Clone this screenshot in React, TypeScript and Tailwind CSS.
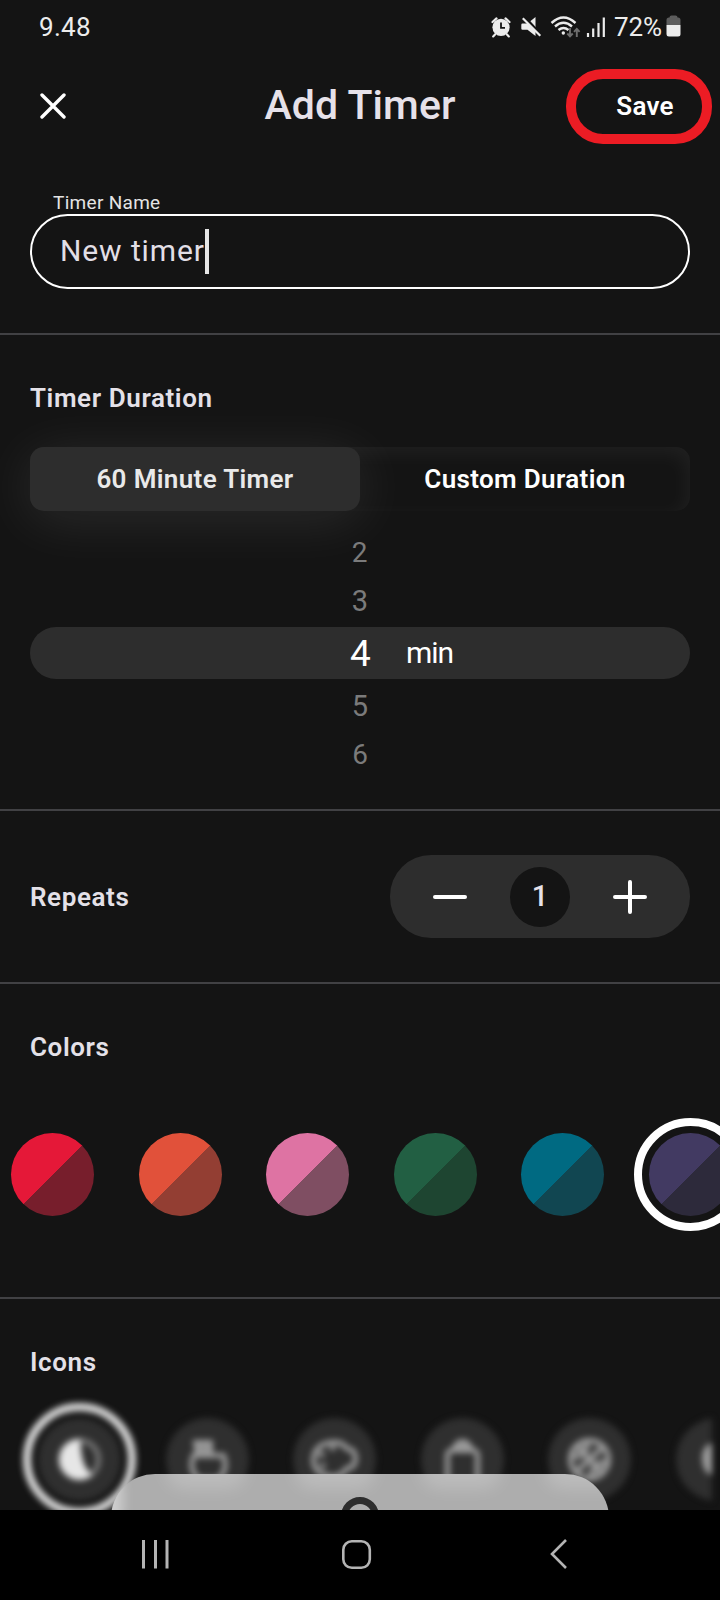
import React from "react";

const cores = [
    { clara: "#e51838", escura: "#771e2c" },
    { clara: "#e1513a", escura: "#933e33" },
    { clara: "#de73a3", escura: "#7f4e62" },
    { clara: "#225f43", escura: "#1e4531" },
    { clara: "#006a82", escura: "#114651" },
    { clara: "#423a62", escura: "#2d2a3b" },
];

const StatusBar: React.FC = () => {
    return (
        <div className="flex h-[54px] items-center justify-between pl-[39px] pr-[38px] text-[26px] leading-none text-[#ececec]">
            <span className="tracking-[0.3px]">9.48</span>
            <svg className="ml-auto mr-[6px]" width="120" height="28" viewBox="488 12 120 28" fill="none">
                {/* alarm */}
                <circle cx="501" cy="26.3" r="8.6" fill="#ececec" />
                <path d="M492.5 21l4-3.6M509.5 21l-4-3.6M495 33.5l-1.8 1.9M507 33.5l1.8 1.9" stroke="#ececec" strokeWidth="2.2" strokeLinecap="round" />
                <path d="M501 21.5v5.3h4" stroke="#141414" strokeWidth="1.8" />
                {/* muted speaker */}
                <path d="M522.5 22.5h5l8-6.5v19l-8-6.3h-5q-1.2 0-1.2-1.2v-3.8q0-1.2 1.2-1.2z" fill="#ececec" />
                <path d="M524 15.5l17.5 19" stroke="#141414" strokeWidth="3" />
                <path d="M522.8 17.2l17.5 17.5" stroke="#ececec" strokeWidth="2.2" />
                {/* wifi */}
                <path d="M551.5 22q12-11 24 0M555 25.5q8.5-7.5 17 0M558.5 29q5-4.2 10 0" stroke="#ececec" strokeWidth="2.4" />
                <circle cx="563.3" cy="32" r="1.7" fill="#ececec" />
                <path d="M570 27v8M567.3 32.5l2.7 2.9 2.7-2.9M576.8 36v-8M574 30.8l2.8-2.9 2.8 2.9" stroke="#6f6f6f" strokeWidth="1.9" />
                {/* signal */}
                <path d="M588 32v4M593.2 27.5V36M598.5 22v14M603.8 16.5V36" stroke="#ececec" strokeWidth="2.2" />
            </svg>
            <span className="tracking-[-0.1px]">72%</span>
            <svg className="ml-[4px] mr-px" width="15" height="24" viewBox="0 0 15 24">
                <path d="M3.5 2.5q0-2 2-2h4q2 0 2 2h.5q2.5 0 2.5 2.5v5h-14V5q0-2.5 2.5-2.5z" fill="#5d5d5d" />
                <path d="M.5 10h14v9q0 2.5-2.5 2.5H3q-2.5 0-2.5-2.5z" fill="#ececec" />
            </svg>
        </div>
    );
};

const Header: React.FC = () => {
    return (
        <header className="relative flex h-[104px] items-center justify-center">
            <button className="absolute left-[40px] top-[39px]">
                <svg width="26" height="26" viewBox="0 0 26 26" fill="none" stroke="#fff" strokeWidth="3.4" strokeLinecap="round">
                    <path d="M2 2l22 22M24 2L2 24" />
                </svg>
            </button>
            <h1 className="pb-[2px] text-[41px] font-medium leading-none tracking-[0.1px] text-[#e6e1e9]">Add Timer</h1>
            <button className="absolute left-[566px] top-[15px] h-[75px] w-[146px] rounded-[37px] border-[10px] border-[#ec1c24] pb-[2px] pl-[12px] text-[26px] font-semibold leading-none tracking-[0.2px] text-white">
                Save
            </button>
        </header>
    );
};

const TimerName: React.FC = () => {
    return (
        <section className="h-[177px] border-b-2 border-[#414144] px-[30px] pt-8">
            <div className="h-6 pl-[23px] text-[19px] leading-[26px] tracking-[0.3px] text-[#e4e4e4]">Timer Name</div>
            <div className="flex h-[75px] items-center rounded-[38px] border-2 border-white pl-[28px]">
                <span className="pb-px text-[30px] leading-none tracking-[0.9px] text-[#e2dfe6]">New timer</span>
                <span className="h-[45px] w-[4px] bg-[#e6e6e6]" />
            </div>
        </section>
    );
};

const Duration: React.FC = () => {
    return (
        <section className="h-[476px] border-b-2 border-[#414144] px-[30px] pt-[43px]">
            <h2 className="h-10 text-[26px] font-semibold leading-10 tracking-[0.6px] text-[#e4e1e8]">Timer Duration</h2>
            <div className="mt-[29px] flex h-16 rounded-[14px] text-[26px] font-semibold leading-none tracking-[0.35px] shadow-[inset_-3px_6px_20px_rgba(255,255,255,0.055)]">
                <button className="w-1/2 rounded-[14px] bg-[#2d2d2d] text-[#e9e9e9] shadow-[0_8px_56px_rgba(255,255,255,0.1)]">
                    60 Minute Timer
                </button>
                <button className="w-1/2 text-white">Custom Duration</button>
            </div>
            <div className="mt-[18px] flex flex-col text-center leading-none text-[#7b7b7b]">
                <span className="h-12 pr-px text-[28px] leading-[48px]">2</span>
                <span className="h-12 text-[29px] leading-[49px]">3</span>
                <div className="mt-[2px] mb-[3px] grid h-[52px] grid-cols-[1fr_24px_1fr] items-center rounded-[26px] bg-[#2d2d2d] text-white">
                    <span className="col-start-2 pl-px pt-px text-[37px]">4</span>
                    <span className="pl-[34px] text-left text-[30px] tracking-[-1px]">min</span>
                </div>
                <span className="h-12 text-[29px] leading-[48px]">5</span>
                <span className="h-12 text-[28px] leading-[50px]">6</span>
            </div>
        </section>
    );
};

const Repeats: React.FC = () => {
    return (
        <section className="flex h-[173px] items-center justify-between border-b-2 border-[#414144] px-[30px]">
            <h2 className="pt-[2px] text-[26px] font-semibold tracking-[0.6px] text-[#e4e1e8]">Repeats</h2>
            <div className="flex h-[83px] w-[300px] items-center justify-between rounded-[41px] bg-[#2d2d2d] px-[42px]">
                <svg width="36" height="36" viewBox="0 0 36 36" stroke="#fff" strokeWidth="4" strokeLinecap="round">
                    <path d="M3 18h30" />
                </svg>
                <span className="flex h-[60px] w-[60px] items-center justify-center rounded-full bg-[#141414] text-[29px] font-medium leading-none text-[#e6e1e9]">
                    1
                </span>
                <svg width="36" height="36" viewBox="0 0 36 36" stroke="#fff" strokeWidth="4" strokeLinecap="round">
                    <path d="M3 18h30M18 3v30" />
                </svg>
            </div>
        </section>
    );
};

const Colors: React.FC = () => {
    return (
        <section className="h-[315px] overflow-hidden border-b-2 border-[#414144] pt-[43px]">
            <h2 className="h-10 px-[30px] text-[26px] font-semibold leading-10 tracking-[0.6px] text-[#e4e1e8]">Colors</h2>
            <div className="ml-[11px] mt-[66px] flex gap-[44.5px]">
                {cores.map((cor, i) => (
                    <div
                        key={cor.clara}
                        className={
                            i === 5
                                ? "h-[83px] w-[83px] shrink-0 rounded-full outline-[8px] outline-offset-[7px] outline-white"
                                : "h-[83px] w-[83px] shrink-0 rounded-full"
                        }
                        style={{ background: `linear-gradient(135deg, ${cor.clara} 50%, ${cor.escura} 50.5%)` }}
                    />
                ))}
            </div>
        </section>
    );
};

const icones = [
    // half moon
    <g key="lua">
        <circle cx="0" cy="0" r="19" fill="none" stroke="#777" strokeWidth="5" />
        <path d="M1-20A20 20 0 1 0 13 15Q1 8 1-20z" fill="#e6e6e6" stroke="none" />
    </g>,
    // mug
    <g key="caneca">
        <path d="M-14-4h30q4 11-1 19-4 5-8 5h-12q-4 0-8-5-5-8-1-19z" />
        <path d="M-12-17h15v12h-13z" fill="#8d8d8d" />
    </g>,
    // palette
    <g key="paleta">
        <path d="M-3-17q11-1 15 6 9 1 9 10t-9 10q-5 9-16 8-17-3-17-17 1-15 18-17z" />
        <path d="M-16-5h6M-14 6h5M-3-14l2 5" />
    </g>,
    // bag
    <g key="bolsa">
        <rect x="-15" y="-9" width="30" height="32" rx="4" />
        <path d="M-9-10q3-8 9-8t9 8z" fill="#8d8d8d" />
    </g>,
    // ball
    <g key="bola">
        <circle cx="0" cy="0" r="19" fill="#3c3c3c" />
        <path d="M-14 13L14-13M-12-13L12 13M-18-3Q-3-2-2-18M18 3Q3 2 2 18" />
    </g>,
    <path key="maca" d="M1-14q-14-2-14 13 1 16 12 14z" fill="#a0a0a0" />,
];

const Icons: React.FC = () => {
    return (
        <section className="relative h-[211px] overflow-hidden pt-[43px]">
            <h2 className="h-10 px-[30px] text-[26px] font-semibold leading-10 tracking-[0.6px] text-[#e4e1e8]">Icons</h2>
            <div className="ml-[16px] mt-[14px] blur-[3.2px]">
                <div className="flex w-[696px] overflow-hidden">
                    {icones.map((icone, i) => (
                        <svg key={i} className="shrink-0" width="127.5" height="127" viewBox="-63.5 -63.5 127.5 127" fill="none" stroke="#9c9c9c" strokeWidth="5">
                            <circle cx="0" cy="0" r="41.5" fill="#2f2f2f" stroke="none" />
                            {i === 0 && <circle cx="0" cy="0" r="52.5" stroke="#dadada" strokeWidth="8" />}
                            {icone}
                        </svg>
                    ))}
                </div>
            </div>
            {/* bottom sheet peeking out above the navigation bar */}
            <div className="absolute left-[111px] top-[175px] h-[80px] w-[498px] overflow-hidden rounded-t-[44px] bg-[#adadad]">
                <div className="absolute left-[-24px] top-[-4px] h-[60px] w-[36px] rounded-full bg-white/40 blur-[6px]" />
                <div className="absolute left-[55px] top-[-22px] h-[36px] w-[80px] rounded-full bg-white/20 blur-[9px]" />
                <div className="absolute left-[184px] top-[-22px] h-[36px] w-[80px] rounded-full bg-white/20 blur-[9px]" />
                <div className="absolute left-[310px] top-[-22px] h-[36px] w-[80px] rounded-full bg-white/20 blur-[9px]" />
                <div className="absolute left-[434px] top-[-22px] h-[36px] w-[80px] rounded-full bg-white/20 blur-[9px]" />
                <div className="absolute left-[230px] top-[23px] h-[38px] w-[38px] rounded-full border-[7px] border-[#2d2d2d]" />
            </div>
        </section>
    );
};

const NavBar: React.FC = () => {
    return (
        <nav className="flex h-[90px] items-center bg-black pb-[2px] pl-[140px]">
            <svg width="30" height="32" viewBox="0 0 30 32" stroke="#b4b4b4" strokeWidth="3">
                <path d="M3.5 2v28.5M15.5 2v28.5M27 2v28.5" />
            </svg>
            <svg className="ml-[171px]" width="31" height="31" viewBox="0 0 31 31" fill="none" stroke="#b4b4b4" strokeWidth="2.6">
                <rect x="2.3" y="2.3" width="26.5" height="26.5" rx="8.5" />
            </svg>
            <svg className="ml-[178px]" width="18" height="32" viewBox="0 0 18 32" fill="none" stroke="#b4b4b4" strokeWidth="2.6">
                <path d="M16 2L2 16 16 30" />
            </svg>
        </nav>
    );
};

const App: React.FC = () => {
    return (
        <div className="h-[1600px] w-[720px] overflow-hidden bg-[#141414] font-['Roboto',sans-serif]">
            <StatusBar />
            <Header />
            <TimerName />
            <Duration />
            <Repeats />
            <Colors />
            <Icons />
            <NavBar />
        </div>
    );
};

export default App;
